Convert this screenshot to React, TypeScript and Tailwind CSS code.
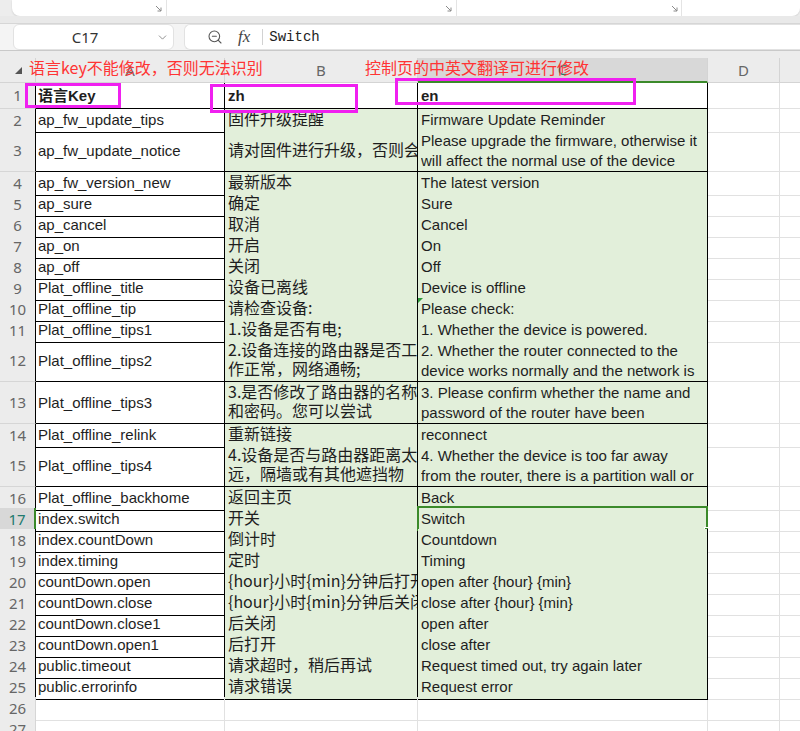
import React from 'react';
import { ZoomOut, ChevronDown } from 'lucide-react';

interface SheetRow {
  k: string;
  zh: string[];
  en: string[];
  h: 21 | 26 | 42;
}

const rows: SheetRow[] = [
  { k: '语言Key', zh: ['zh'], en: ['en'], h: 26 },
  { k: 'ap_fw_update_tips', zh: ['固件升级提醒'], en: ['Firmware Update Reminder'], h: 21 },
  {
    k: 'ap_fw_update_notice',
    zh: ['请对固件进行升级，否则会影响设备的正常使用'],
    en: ['Please upgrade the firmware, otherwise it', 'will affect the normal use of the device'],
    h: 42,
  },
  { k: 'ap_fw_version_new', zh: ['最新版本'], en: ['The latest version'], h: 21 },
  { k: 'ap_sure', zh: ['确定'], en: ['Sure'], h: 21 },
  { k: 'ap_cancel', zh: ['取消'], en: ['Cancel'], h: 21 },
  { k: 'ap_on', zh: ['开启'], en: ['On'], h: 21 },
  { k: 'ap_off', zh: ['关闭'], en: ['Off'], h: 21 },
  { k: 'Plat_offline_title', zh: ['设备已离线'], en: ['Device is offline'], h: 21 },
  { k: 'Plat_offline_tip', zh: ['请检查设备:'], en: ['Please check:'], h: 21 },
  { k: 'Plat_offline_tips1', zh: ['1.设备是否有电;'], en: ['1. Whether the device is powered.'], h: 21 },
  {
    k: 'Plat_offline_tips2',
    zh: ['2.设备连接的路由器是否工', '作正常，网络通畅;'],
    en: ['2. Whether the router connected to the', 'device works normally and the network is'],
    h: 42,
  },
  {
    k: 'Plat_offline_tips3',
    zh: ['3.是否修改了路由器的名称', '和密码。您可以尝试'],
    en: ['3. Please confirm whether the name and', 'password of the router have been'],
    h: 42,
  },
  { k: 'Plat_offline_relink', zh: ['重新链接'], en: ['reconnect'], h: 21 },
  {
    k: 'Plat_offline_tips4',
    zh: ['4.设备是否与路由器距离太', '远，隔墙或有其他遮挡物'],
    en: ['4. Whether the device is too far away', 'from the router, there is a partition wall or'],
    h: 42,
  },
  { k: 'Plat_offline_backhome', zh: ['返回主页'], en: ['Back'], h: 21 },
  { k: 'index.switch', zh: ['开关'], en: ['Switch'], h: 21 },
  { k: 'index.countDown', zh: ['倒计时'], en: ['Countdown'], h: 21 },
  { k: 'index.timing', zh: ['定时'], en: ['Timing'], h: 21 },
  { k: 'countDown.open', zh: ['{hour}小时{min}分钟后打开'], en: ['open after {hour} {min}'], h: 21 },
  { k: 'countDown.close', zh: ['{hour}小时{min}分钟后关闭'], en: ['close after {hour} {min}'], h: 21 },
  { k: 'countDown.close1', zh: ['后关闭'], en: ['open after'], h: 21 },
  { k: 'countDown.open1', zh: ['后打开'], en: ['close after'], h: 21 },
  { k: 'public.timeout', zh: ['请求超时，稍后再试'], en: ['Request timed out, try again later'], h: 21 },
  { k: 'public.errorinfo', zh: ['请求错误'], en: ['Request error'], h: 21 },
];

const heightClass = { 21: 'h-[21px]', 26: 'h-[26px]', 42: 'h-[42px]' };
const cols = 'grid grid-cols-[36px_189px_193px_290px_72px_1fr]';
const latin = { fontFamily: '"Liberation Sans", "Noto Sans CJK SC", sans-serif' };
const cjk = { fontFamily: '"Noto Sans CJK SC", "Liberation Sans", sans-serif' };
const ui = { fontFamily: '"Noto Sans", sans-serif' };

const CornerArrow = () => (
  <svg width="7" height="7" viewBox="0 0 7 7" fill="none" stroke="#8a8a8a" strokeWidth="1">
    <path d="M1 1 L6 6 M6 2.5 V6 H2.5" />
  </svg>
);

const Lines: React.FC<{ lines: string[]; bold?: boolean; leading?: string }> = ({
  lines,
  bold,
  leading = 'leading-[20px]',
}) => (
  <>
    {lines.map((l, i) => (
      <div key={i} className={`whitespace-nowrap ${leading} ${bold ? 'font-bold' : ''}`}>
        {l}
      </div>
    ))}
  </>
);

const App: React.FC = () => {
  return (
    <div
      className="relative w-[800px] h-[731px] overflow-hidden bg-white text-[15px] text-[#1e1e1e]"
      style={cjk}
    >
      {/* ribbon bottom */}
      <div className="h-[16px] bg-[#ededed]">
        <div className="ml-[12px] h-full flex bg-white rounded-b-[8px] shadow-[0_1px_2px_rgba(0,0,0,0.12)]">
          <div className="w-[155px] flex justify-end items-end pr-[4px] pb-[4px] border-r border-[#e4e4e4]">
            <CornerArrow />
          </div>
          <div className="w-[290px] flex justify-end items-end pr-[4px] pb-[4px] border-r border-[#e4e4e4]">
            <CornerArrow />
          </div>
          <div className="w-[225px] flex justify-end items-end pr-[3px] pb-[4px] border-r border-[#e4e4e4]">
            <CornerArrow />
          </div>
          <div className="flex-1" />
        </div>
      </div>
      <div className="h-[8px] bg-[#e9e9e9] border-b border-[#d6d6d6]" />

      {/* formula bar */}
      <div className="h-[27px] flex pl-[13px] bg-[#f4f4f4] border-b border-[#c9c9c9]">
        <div className="w-[161px] h-[26px] flex items-center bg-white rounded-[6px] border border-[#e2e2e2]">
          <span className="flex-1 text-center text-[15px] text-[#333]" style={ui}>
            C17
          </span>
          <ChevronDown size={13} strokeWidth={1.5} className="text-[#777] mr-[4px]" />
        </div>
        <div className="ml-[10px] flex-1 h-[26px] flex items-center pl-[22px] bg-white rounded-l-[6px] border border-r-0 border-[#e2e2e2]">
          <ZoomOut size={16} strokeWidth={1.6} className="text-[#555]" />
          <span className="ml-[15px] italic text-[17px] text-[#444]" style={{ fontFamily: '"Liberation Serif", serif' }}>
            fx
          </span>
          <div className="ml-[12px] w-px h-[16px] bg-[#d2d2d2]" />
          <span className="ml-[6px] text-[14px] text-[#222]" style={{ fontFamily: '"Liberation Mono", monospace' }}>
            Switch
          </span>
        </div>
      </div>

      {/* column headers */}
      <div className="h-[7px] bg-[#ececec]" />
      <div className={`${cols} h-[25px] bg-[#ececec] text-[#666] text-[15px]`} style={ui}>
        <div className="relative border-r border-b border-[#d4d4d4]">
          <svg className="absolute left-[15px] top-[9px]" width="8" height="8" viewBox="0 0 8 8">
            <polygon points="7,0 7,7 0,7" fill="#555" />
          </svg>
        </div>
        <div className="flex items-center justify-center border-r border-b border-[#d4d4d4]">A</div>
        <div className="flex items-center justify-center border-r border-b border-[#d4d4d4]">B</div>
        <div className="flex items-center justify-center bg-[#d8d8d8] border-r border-r-[#d4d4d4] border-b-2 border-b-[#3b8a2a] text-[#217a6e]">
          C
        </div>
        <div className="flex items-center justify-center border-r border-b border-[#d4d4d4]">D</div>
        <div className="border-b border-[#d4d4d4]" />
      </div>

      {/* data rows */}
      {rows.map((r, i) => {
        const n = i + 1;
        const sel = n === 17;
        const green = n > 1 ? 'bg-[#e2efda]' : 'bg-white';
        const zhLeading = r.zh.length > 1 ? 'leading-[19px]' : 'leading-[17px]';
        return (
          <div key={n} className={`${cols} ${heightClass[r.h]}`}>
            <div
              className={`flex items-center justify-center border-b border-b-[#d6d6d6] ${
                sel
                  ? 'bg-[#d8d8d8] text-[#217a6e] border-r-2 border-r-[#3b8a2a]'
                  : 'bg-[#ececec] text-[#666] border-r border-r-black'
              }`}
              style={ui}
            >
              {n}
            </div>
            <div
              className="flex flex-col justify-center overflow-hidden pl-[2px] border-r border-b border-black"
              style={latin}
            >
              <Lines lines={[r.k]} bold={n === 1} />
            </div>
            {n === 1 ? (
              <div className="flex flex-col justify-center pl-[3px] border-r border-b border-black bg-white" style={latin}>
                <Lines lines={r.zh} bold />
              </div>
            ) : (
              <div
                className={`flex flex-col justify-center overflow-hidden pl-[3px] pb-[3px] text-[16px] border-r border-b border-black ${green}`}
                style={cjk}
              >
                <Lines lines={r.zh} leading={zhLeading} />
              </div>
            )}
            <div
              className={`relative flex flex-col justify-center pl-[3px] border-r border-b border-black ${green}`}
              style={latin}
            >
              <div className="overflow-hidden">
                <Lines lines={r.en} bold={n === 1} />
              </div>
              {n === 10 && (
                <div className="absolute left-0 top-0 w-0 h-0 border-t-[5px] border-t-[#2f9a3a] border-r-[5px] border-r-transparent" />
              )}
              {sel && (
                <div className="absolute -left-[1px] -top-[2px] -right-[1px] bottom-0 border-2 border-[#3b8a2a]">
                  <div className="absolute -right-[3px] -bottom-[3px] w-[5px] h-[5px] bg-[#3b8a2a] border border-white" />
                </div>
              )}
            </div>
            <div className="border-r border-b border-[#e1e1e1]" />
            <div className="border-b border-[#e1e1e1]" />
          </div>
        );
      })}
      {[26, 27].map((n) => (
        <div key={n} className={`${cols} h-[21px]`}>
          <div
            className="flex items-center justify-center bg-[#ececec] text-[#666] border-r border-b border-[#d6d6d6]"
            style={ui}
          >
            {n}
          </div>
          <div className="border-r border-b border-[#e1e1e1]" />
          <div className="border-r border-b border-[#e1e1e1]" />
          <div className="border-r border-b border-[#e1e1e1]" />
          <div className="border-r border-b border-[#e1e1e1]" />
          <div className="border-b border-[#e1e1e1]" />
        </div>
      ))}

      {/* annotations */}
      <div className="absolute left-[29px] top-[56px] text-[16px] leading-[22px] text-[#ff3434] whitespace-nowrap">
        语言key不能修改，否则无法识别
      </div>
      <div className="absolute left-[365px] top-[56px] text-[16px] leading-[22px] text-[#ff3434] whitespace-nowrap">
        控制页的中英文翻译可进行修改
      </div>
      <div className="absolute left-[25px] top-[83px] w-[96px] h-[25px] border-[3px] border-[#f020f0]" />
      <div className="absolute left-[210px] top-[84px] w-[148px] h-[29px] border-[3px] border-[#f020f0]" />
      <div className="absolute left-[395px] top-[78px] w-[241px] h-[27px] border-[3px] border-[#f020f0]" />
    </div>
  );
};

export default App;
